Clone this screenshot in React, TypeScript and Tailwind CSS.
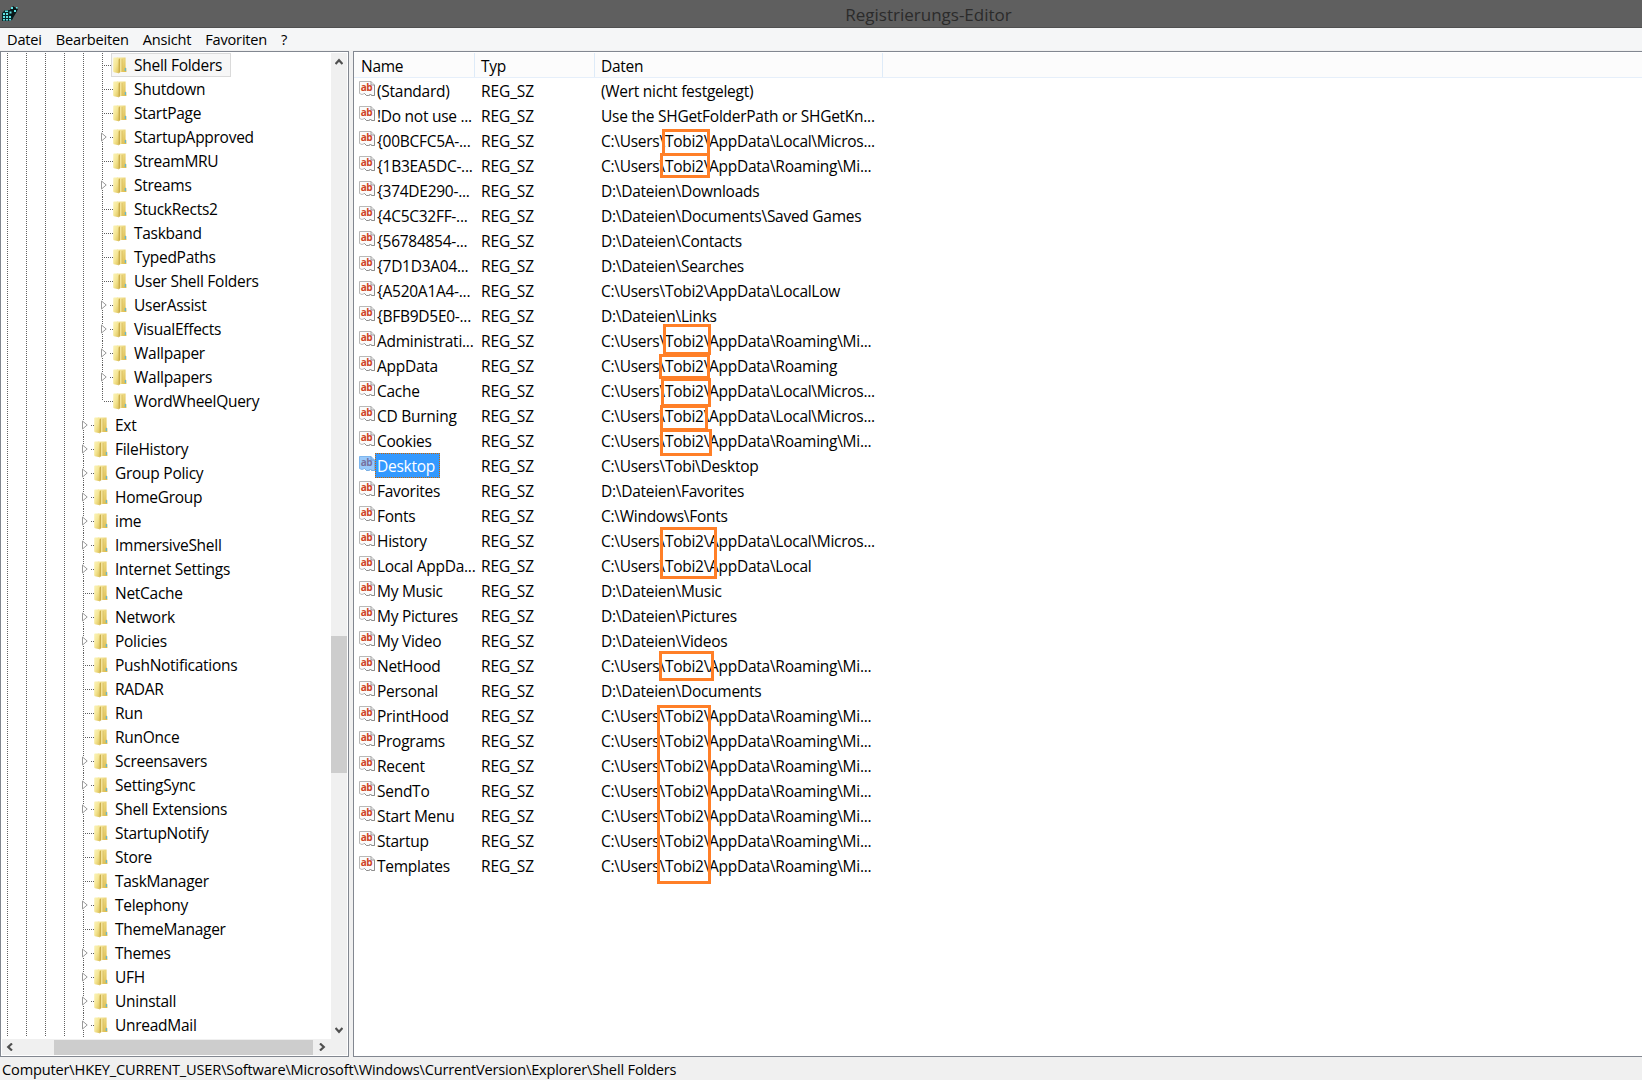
import React from "react";

type Node = [label: string, expandable?: boolean];

const inner: Node[] = [
  ["Shell Folders"], ["Shutdown"], ["StartPage"], ["StartupApproved", true], ["StreamMRU"],
  ["Streams", true], ["StuckRects2"], ["Taskband"], ["TypedPaths"], ["User Shell Folders"],
  ["UserAssist", true], ["VisualEffects", true], ["Wallpaper", true], ["Wallpapers", true], ["WordWheelQuery"],
];

const outer: Node[] = [
  ["Ext", true], ["FileHistory", true], ["Group Policy", true], ["HomeGroup", true], ["ime", true],
  ["ImmersiveShell", true], ["Internet Settings", true], ["NetCache"], ["Network", true], ["Policies", true],
  ["PushNotifications"], ["RADAR"], ["Run"], ["RunOnce"], ["Screensavers", true], ["SettingSync", true],
  ["Shell Extensions", true], ["StartupNotify"], ["Store"], ["TaskManager"], ["Telephony", true],
  ["ThemeManager"], ["Themes", true], ["UFH", true], ["Uninstall", true], ["UnreadMail", true],
];

const values: [string, string][] = [
  ["(Standard)", "(Wert nicht festgelegt)"],
  ["!Do not use ...", "Use the SHGetFolderPath or SHGetKn..."],
  ["{00BCFC5A-...", "C:\\Users\\Tobi2\\AppData\\Local\\Micros..."],
  ["{1B3EA5DC-...", "C:\\Users\\Tobi2\\AppData\\Roaming\\Mi..."],
  ["{374DE290-...", "D:\\Dateien\\Downloads"],
  ["{4C5C32FF-...", "D:\\Dateien\\Documents\\Saved Games"],
  ["{56784854-...", "D:\\Dateien\\Contacts"],
  ["{7D1D3A04...", "D:\\Dateien\\Searches"],
  ["{A520A1A4-...", "C:\\Users\\Tobi2\\AppData\\LocalLow"],
  ["{BFB9D5E0-...", "D:\\Dateien\\Links"],
  ["Administrati...", "C:\\Users\\Tobi2\\AppData\\Roaming\\Mi..."],
  ["AppData", "C:\\Users\\Tobi2\\AppData\\Roaming"],
  ["Cache", "C:\\Users\\Tobi2\\AppData\\Local\\Micros..."],
  ["CD Burning", "C:\\Users\\Tobi2\\AppData\\Local\\Micros..."],
  ["Cookies", "C:\\Users\\Tobi2\\AppData\\Roaming\\Mi..."],
  ["Desktop", "C:\\Users\\Tobi\\Desktop"],
  ["Favorites", "D:\\Dateien\\Favorites"],
  ["Fonts", "C:\\Windows\\Fonts"],
  ["History", "C:\\Users\\Tobi2\\AppData\\Local\\Micros..."],
  ["Local AppDa...", "C:\\Users\\Tobi2\\AppData\\Local"],
  ["My Music", "D:\\Dateien\\Music"],
  ["My Pictures", "D:\\Dateien\\Pictures"],
  ["My Video", "D:\\Dateien\\Videos"],
  ["NetHood", "C:\\Users\\Tobi2\\AppData\\Roaming\\Mi..."],
  ["Personal", "D:\\Dateien\\Documents"],
  ["PrintHood", "C:\\Users\\Tobi2\\AppData\\Roaming\\Mi..."],
  ["Programs", "C:\\Users\\Tobi2\\AppData\\Roaming\\Mi..."],
  ["Recent", "C:\\Users\\Tobi2\\AppData\\Roaming\\Mi..."],
  ["SendTo", "C:\\Users\\Tobi2\\AppData\\Roaming\\Mi..."],
  ["Start Menu", "C:\\Users\\Tobi2\\AppData\\Roaming\\Mi..."],
  ["Startup", "C:\\Users\\Tobi2\\AppData\\Roaming\\Mi..."],
  ["Templates", "C:\\Users\\Tobi2\\AppData\\Roaming\\Mi..."],
];

// Highlight frames drawn over the value list, in list coordinates.
const frames = [
  "left-[308px] top-[77px] w-[48px] h-[27px]",
  "left-[306px] top-[101px] w-[50px] h-[25px]",
  "left-[309px] top-[272px] w-[48px] h-[31px]",
  "left-[305px] top-[302px] w-[51px] h-[25px]",
  "left-[307px] top-[326px] w-[50px] h-[29px]",
  "left-[306px] top-[353px] w-[48px] h-[26px]",
  "left-[306px] top-[377px] w-[52px] h-[27px]",
  "left-[306px] top-[475px] w-[57px] h-[52px]",
  "left-[305px] top-[599px] w-[55px] h-[30px]",
  "left-[303px] top-[653px] w-[54px] h-[179px]",
];

const dotsV = "bg-[linear-gradient(to_bottom,#606060_50%,transparent_50%)] bg-[length:1px_2px]";
const dotsH = "bg-[linear-gradient(to_right,#606060_50%,transparent_50%)] bg-[length:2px_1px]";

function Folder() {
  return (
    <svg width="14" height="17" viewBox="0 0 14 17" className="shrink-0">
      <defs>
        <linearGradient id="front" x1="0" x2="1" y1="0" y2="1">
          <stop offset="0" stopColor="#fbf4bb" />
          <stop offset=".5" stopColor="#f5e695" />
          <stop offset="1" stopColor="#dcc158" />
        </linearGradient>
        <linearGradient id="back" x1="0" x2="1" y1="0" y2="1">
          <stop offset="0" stopColor="#f6e9a2" />
          <stop offset="1" stopColor="#dcbb4a" />
        </linearGradient>
      </defs>
      <path d="M4 .4h8.600v10.100l.8.800V15H4z" fill="url(#back)" />
      <path d="M.2 1.200Q.2.400 1 .4h3.500l1.300 1.200V16.300L.9 15.200Q.2 15 .2 14.300z" fill="url(#front)" />
      <path d="M5.600 2.600 7 1.200v14L5.600 16.400z" fill="#cbae4b" />
      <path d="M7 1.400h1.700v12.800L7 15.400z" fill="#f3e39a" />
      <path d="M8.700 2h.7v12h-.7z" fill="#d6bb5a" />
      <path d="M11.800 11h1.100v3h-1.100z" fill="#5bb6da" />
    </svg>
  );
}

function ValueIcon({ selected }: { selected: boolean }) {
  return (
    <svg width="16" height="16" viewBox="0 0 16 16" className="shrink-0">
      <path
        d="M.5 .5H12L15.500 4V14.500H13L11.500 13.500 9.500 14.500H7.500L5.500 12.500 3 13.500.5 12.500z"
        fill={selected ? "#99c9fb" : "#fbfbfb"}
        stroke={selected ? "#7eb6ee" : "#b9b9b9"}
      />
      <path d="M12 .5V4h3.500" fill="none" stroke={selected ? "#6b9fd6" : "#9a9a9a"} />
      <path d="M15.500 4V14.500H13L11.500 13.500 9.500 14.500H7.500L5.500 12.500" fill="none" stroke={selected ? "#79aee3" : "#8d8d8d"} />
      <text x="1.800" y="10" fontSize="10" fontWeight="700" fontFamily="Open Sans, sans-serif" textLength="11.500" fill={selected ? "#77729f" : "#cf4426"}>
        ab
      </text>
    </svg>
  );
}

function Arrow({ d }: { d: string }) {
  return (
    <svg width="8" height="8" viewBox="0 0 8 8" className="shrink-0">
      <path d={d} fill="none" stroke="#505050" strokeWidth="2.200" />
    </svg>
  );
}

function TreeRow({ node, depth, selected, last }: { node: Node; depth: number; selected?: boolean; last?: boolean }) {
  const [label, open] = node;
  return (
    <div className="flex h-6 items-center">
      {Array.from({ length: depth }, (_, i) => (
        <div key={i} className="flex h-6 w-[19px] shrink-0">
          <i className={`w-px ${dotsV}`} />
        </div>
      ))}
      <div className="flex h-6 w-[9px] shrink-0 items-center">
        {open ? (
          <div className="flex h-6 w-[6px] shrink-0 flex-col">
            <i className={`h-[7px] w-px ${dotsV}`} />
            <svg width="6" height="10" viewBox="0 0 6 10" className="-ml-px">
              <path d="M.5 1v8L5.200 5z" fill="#fff" stroke="#989898" />
            </svg>
            <i className={`h-[7px] w-px ${dotsV}`} />
          </div>
        ) : (
          <i className={last ? `h-3 w-px shrink-0 self-start ${dotsV}` : `h-6 w-px shrink-0 ${dotsV}`} />
        )}
        {open ? <i className={`ml-[2px] h-px w-[3px] shrink-0 ${dotsH}`} /> : <i className={`ml-px h-px w-[9px] shrink-0 ${dotsH}`} />}
      </div>
      <div className={`flex h-6 items-center border pl-px pr-2 ${selected ? "border-[#dadada] bg-[#f7f7f7]" : "border-transparent"}`}>
        <Folder />
        <span className="ml-[7px] whitespace-pre">{label}</span>
      </div>
    </div>
  );
}

export default function App() {
  return (
    <div className="flex h-[1088px] w-[1642px] flex-col overflow-hidden bg-white font-['Open_Sans','Noto_Sans',sans-serif] text-[15.5px] leading-6 tracking-[-0.27px] text-black">
      <div className="flex h-7 shrink-0 items-center border-b border-[#505050] bg-[#5f5f5f]">
        <svg width="18" height="18" viewBox="0 0 18 18" className="ml-px">
          <path d="M1 8 4 5h8v9l-3 2H1z" fill="#07292b" />
          <path d="M2 8h2v2H2zM5 8h2v2H5zM2 11h2v2H2zM5 11h2v2H5zM2 14h2v1.500H2zM5 14h2v1.500H5zM8 11h2v2H8zM8 14h2v1.500H8zM4 5.500h3v1.500H4z" fill="#5fdfe2" />
          <path d="M8 6l4-5 3 2 2 1-2 4-3 5-2-2z" fill="#08191a" />
          <path d="M10 2h2v2h-2zM13 5h2v2h-2zM15 2h1.500v1.500H15zM8.500 6.500h2v2h-2z" fill="#5fe3e6" />
        </svg>
        <div className="flex-1 pl-[196px] pt-[2px] text-center text-[17px] tracking-normal text-[#2b2b2b]">Registrierungs-Editor</div>
      </div>
      <div className="flex h-[22px] shrink-0 items-center gap-[14px] bg-[#f5f6f7] pl-[7px] pb-px text-[14.6px] tracking-[-0.2px]">
        {["Datei", "Bearbeiten", "Ansicht", "Favoriten", "?"].map((m) => (
          <span key={m}>{m}</span>
        ))}
      </div>
      <div className="flex h-[1008px] shrink-0 gap-1 bg-[#f0f0f0] pt-px pb-px">
        <div className="flex w-[349px] shrink-0 flex-col border border-[#828790] bg-white p-px">
          <div className="flex h-[986px]">
            <div className="w-[329px] overflow-hidden pl-[5px]">
              {inner.map((n, i) => (
                <TreeRow key={n[0]} node={n} depth={5} selected={i === 0} last={i === inner.length - 1} />
              ))}
              {outer.map((n) => (
                <TreeRow key={n[0]} node={n} depth={4} />
              ))}
            </div>
            <div className="flex w-4 flex-col items-center bg-[#f0f0f0] pt-[5px]">
              <Arrow d="M.5 6 4 2.200 7.500 6" />
              <div className="mt-[570px] h-[137px] w-4 bg-[#cdcdcd]" />
              <div className="mt-auto mb-[5px] flex">
                <Arrow d="M.5 2 4 5.800 7.500 2" />
              </div>
            </div>
          </div>
          <div className="flex flex-1 items-center bg-[#f0f0f0] pl-1">
            <Arrow d="M6 .5 2.200 4 6 7.500" />
            <div className="ml-10 h-[15px] w-[259px] bg-[#cdcdcd]" />
            <div className="ml-[5px] flex">
              <Arrow d="M2 .5 5.800 4 2 7.500" />
            </div>
          </div>
        </div>
        <div className="relative flex-1 border border-r-0 border-[#828790] bg-white">
          <div className="mt-px flex h-[25px] border-b border-[#e6effa] bg-[#fcfcfc] leading-[26px]">
            <div className="w-[121px] border-r border-[#deebf8] pl-[7px]">Name</div>
            <div className="w-[120px] border-r border-[#deebf8] pl-[6px]">Typ</div>
            <div className="w-[288px] border-r border-[#deebf8] pl-[6px]">Daten</div>
          </div>
          {values.map(([name, data]) => {
            const sel = name === "Desktop";
            return (
              <div key={name} className="flex h-[25px] whitespace-pre leading-[26px]">
                <div className="flex w-[127px] pl-[5px] pt-[3px]">
                  <ValueIcon selected={sel} />
                  <div className={`-mt-[3px] flex h-[25px] items-center pl-px pr-1 ${sel ? "border border-dotted border-[#cc6600] bg-[#3399ff] text-white" : "border border-transparent"}`}>
                    {name}
                  </div>
                </div>
                <div className="w-[120px] tracking-[-0.1px]">REG_SZ</div>
                <div>{data}</div>
              </div>
            );
          })}
          {frames.map((f) => (
            <div key={f} className={`absolute border-[3px] border-[#ff7f27] ${f}`} />
          ))}
        </div>
      </div>
      <div className="h-[22px] shrink-0 whitespace-pre bg-[#f0f0f0] pl-[2px] text-[14.6px] leading-[22px] tracking-[-0.17px]">
        Computer\HKEY_CURRENT_USER\Software\Microsoft\Windows\CurrentVersion\Explorer\Shell Folders
      </div>
    </div>
  );
}
